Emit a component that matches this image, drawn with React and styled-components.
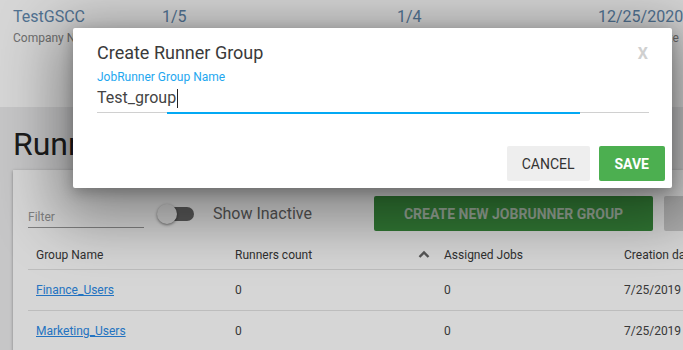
import React from "react";
import styled, { createGlobalStyle } from "styled-components";

const Global = createGlobalStyle`
  html, body { margin: 0; padding: 0; overflow: hidden; }
  body { font-family: Roboto, "Liberation Sans", sans-serif; background: #ececec; width: 683px; height: 350px; }
  * { box-sizing: border-box; }
`;

const Page = styled.div`
  position: relative;
  width: 683px;
  height: 350px;
  overflow: hidden;
  background: #ececed;
`;

const Header = styled.header`
  height: 107px;
  background: #ffffff;
  padding: 6px 0 0 13px;
  display: grid;
  grid-template-columns: 149px 235px 201px 1fr;
`;

const Stat = styled.div`
  display: flex;
  flex-direction: column;
  white-space: nowrap;
`;

const StatValue = styled.div`
  font-size: 16px;
  line-height: 22px;
  color: #6289af;
`;

const StatLabel = styled.div`
  font-size: 12px;
  line-height: 14px;
  margin-top: 3px;
  color: #858585;
`;

const Main = styled.main`
  padding: 0 0 0 13px;
`;

const PageTitle = styled.h1`
  margin: 0;
  padding: 17px 0 0 0;
  height: 63px;
  font-size: 32px;
  font-weight: 400;
  line-height: 40px;
  color: #222;
  white-space: nowrap;
`;

const Card = styled.section`
  background: #fff;
  box-shadow: 0 1px 3px rgba(0, 0, 0, 0.35);
  padding: 26px 0 0 15px;
  height: 200px;
  overflow: hidden;
`;

const Toolbar = styled.div`
  display: flex;
  align-items: center;
  height: 35px;
  white-space: nowrap;
  & > * { flex: none; }
`;

const FilterInput = styled.div`
  width: 116px;
  height: 21px;
  margin-top: 8px;
  border-bottom: 1px solid #9a9a9a;
  font-size: 12px;
  line-height: 20px;
  color: #9a9a9a;
`;

const Toggle = styled.div`
  position: relative;
  width: 38px;
  height: 20px;
  margin-left: 13px;
  display: flex;
  align-items: center;
`;

const Track = styled.div`
  margin-left: 10px;
  width: 27px;
  height: 14px;
  border-radius: 7px;
  background: #6a6a6a;
`;

const Thumb = styled.div`
  position: absolute;
  left: 0;
  top: 0;
  width: 20px;
  height: 20px;
  border-radius: 50%;
  background: #f5f5f5;
  box-shadow: 0 1px 3px rgba(0, 0, 0, 0.5);
`;

const ToggleLabel = styled.span`
  margin-left: 18px;
  font-size: 16px;
  color: #666;
`;

const Button = styled.button`
  height: 35px;
  border: none;
  border-radius: 2px;
  font-family: Roboto, "Liberation Sans", sans-serif;
  font-size: 14px;
  font-weight: ${(p) => (p.$bold ? 700 : 400)};
  text-transform: uppercase;
  background: ${(p) => p.$bg};
  color: ${(p) => p.$fg};
  padding: 0 ${(p) => p.$pad || 16}px;
  margin-left: ${(p) => p.$ml || 0}px;
  flex: none;
  white-space: nowrap;
  cursor: pointer;
`;

const Table = styled.div`
  margin-top: 9px;
  width: 700px;
`;

const Row = styled.div`
  display: grid;
  grid-template-columns: 199px 209px 180px 1fr;
  align-items: center;
  height: ${(p) => (p.$head ? 30 : 41)}px;
  border-bottom: 1px solid #e2e2e2;
  font-size: 12px;
  color: ${(p) => (p.$head ? "#3a3a3a" : "#444")};
`;

const Cell = styled.div`
  padding: 0 8px;
  white-space: nowrap;
  display: flex;
  align-items: center;
`;

const HeadCell = styled(Cell)`
  justify-content: space-between;
  padding-right: 6px;
`;

const Link = styled.a`
  color: #2b8ae6;
  text-decoration: underline;
  cursor: pointer;
`;

const Scrim = styled.div`
  position: absolute;
  inset: 0;
  background: rgba(0, 0, 0, 0.16);
`;

const Modal = styled.div`
  position: absolute;
  left: 73px;
  top: 28px;
  width: 599px;
  height: 160px;
  background: #fff;
  border-radius: 2px;
  box-shadow: 0 16px 60px 16px rgba(0, 0, 0, 0.38), 0 4px 14px rgba(0, 0, 0, 0.25);
  padding: 13px 0 0 24px;
  display: flex;
  flex-direction: column;
`;

const ModalHead = styled.div`
  display: flex;
  justify-content: space-between;
  align-items: center;
  padding-right: 24px;
  height: 24px;
`;

const ModalTitle = styled.h2`
  margin: 0;
  font-size: 18px;
  font-weight: 400;
  line-height: 24px;
  color: #3a3a3a;
`;

const Close = styled.span`
  font-size: 16px;
  font-weight: 700;
  color: #d0d0d0;
  line-height: 24px;
  margin-top: 2px;
`;

const Field = styled.div`
  margin-top: 5px;
  width: 552px;
  position: relative;
  border-bottom: 1px solid #d0d0d0;
`;

const FieldLabel = styled.label`
  display: block;
  font-size: 12px;
  line-height: 14px;
  color: #1ea7ef;
`;

const FieldValue = styled.div`
  font-size: 16px;
  line-height: 20px;
  padding: 4px 0 4px;
  color: #444;
  display: flex;
  align-items: center;
`;

const Caret = styled.span`
  display: inline-block;
  width: 1px;
  height: 19px;
  background: #222;
  margin-left: 1px;
`;

const FocusBar = styled.div`
  position: absolute;
  left: 70px;
  bottom: -2px;
  height: 2px;
  background: #03a9f4;
`;

const Footer = styled.div`
  margin-top: 33px;
  display: flex;
  justify-content: flex-end;
  gap: 9px;
  padding-right: 7px;
`;

const ChevronUp = () => (
  <svg width="12" height="9" viewBox="0 0 12 9">
    <path d="M1.5 7 L6 2.5 L10.5 7" fill="none" stroke="#666" strokeWidth="2.4" />
  </svg>
);

const rows = [
  { name: "Finance_Users", runners: 0, jobs: 0, date: "7/25/2019" },
  { name: "Marketing_Users", runners: 0, jobs: 0, date: "7/25/2019" },
];

export default function App() {
  return (
    <Page>
      <Global />
      <Header>
        <Stat>
          <StatValue>TestGSCC</StatValue>
          <StatLabel>Company Name</StatLabel>
        </Stat>
        <Stat>
          <StatValue>1/5</StatValue>
          <StatLabel>Licenses</StatLabel>
        </Stat>
        <Stat>
          <StatValue>1/4</StatValue>
          <StatLabel>Runners</StatLabel>
        </Stat>
        <Stat>
          <StatValue>12/25/2020</StatValue>
          <StatLabel>Expiration Date</StatLabel>
        </Stat>
      </Header>
      <Main>
        <PageTitle>Runner Groups</PageTitle>
        <Card>
          <Toolbar>
            <FilterInput>Filter</FilterInput>
            <Toggle>
              <Track />
              <Thumb />
            </Toggle>
            <ToggleLabel>Show Inactive</ToggleLabel>
            <Button $bold $bg="#3b8f3f" $fg="#b4c6b4" $pad={30} $ml={62}>
              Create New JobRunner Group
            </Button>
            <Button $bg="#d2d2d2" $fg="#777" $ml={11} $pad={28}>
              Edit
            </Button>
          </Toolbar>
          <Table>
            <Row $head>
              <Cell>Group Name</Cell>
              <HeadCell>
                <span>Runners count</span>
                <ChevronUp />
              </HeadCell>
              <Cell>Assigned Jobs</Cell>
              <Cell>Creation date</Cell>
            </Row>
            {rows.map((r) => (
              <Row key={r.name}>
                <Cell>
                  <Link>{r.name}</Link>
                </Cell>
                <Cell>{r.runners}</Cell>
                <Cell>{r.jobs}</Cell>
                <Cell>{r.date}</Cell>
              </Row>
            ))}
          </Table>
        </Card>
      </Main>
      <Scrim />
      <Modal>
        <ModalHead>
          <ModalTitle>Create Runner Group</ModalTitle>
          <Close>X</Close>
        </ModalHead>
        <Field>
          <FieldLabel>JobRunner Group Name</FieldLabel>
          <FieldValue>
            Test_group
            <Caret />
          </FieldValue>
          <FocusBar style={{ width: 413 }} />
        </Field>
        <Footer>
          <Button $bg="#eeeeee" $fg="#333" $pad={15}>
            Cancel
          </Button>
          <Button $bold $bg="#4caf50" $fg="#fff" $pad={16}>
            Save
          </Button>
        </Footer>
      </Modal>
    </Page>
  );
}
